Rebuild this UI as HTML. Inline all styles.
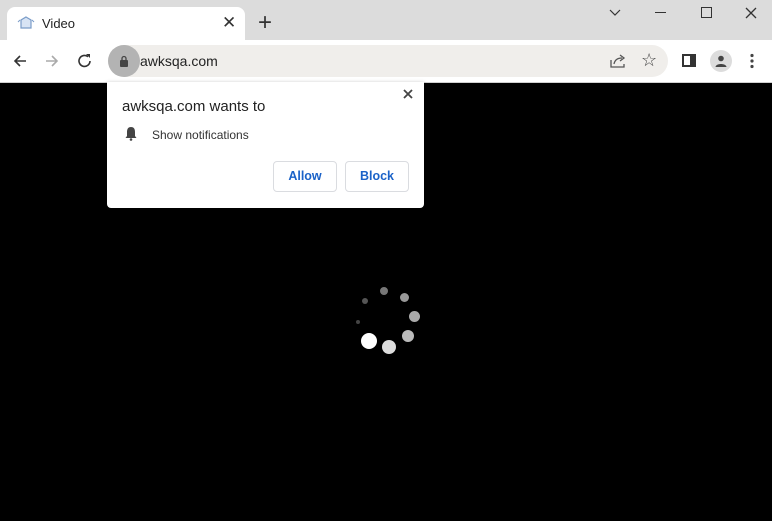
<!DOCTYPE html>
<html><head><style>
*{margin:0;padding:0;box-sizing:border-box}
body{width:772px;height:521px;overflow:hidden;background:#000;font-family:"Liberation Sans",sans-serif;position:relative}
.strip{position:absolute;left:0;top:0;width:772px;height:40px;background:#dcdcdc}
.tab{position:absolute;left:7px;top:7px;width:238px;height:34px;background:#fff;border-radius:8px 8px 0 0}
.toolbar{position:absolute;left:0;top:40px;width:772px;height:43px;background:#fff;border-bottom:1px solid #d0d0d0}
.omni{position:absolute;left:108px;top:45px;width:560px;height:32px;background:#f0eeeb;border-radius:16px}
.t{position:absolute;white-space:nowrap}
.pop{position:absolute;left:107px;top:82px;width:317px;height:126px;background:#fff;border-radius:0 0 4px 4px;box-shadow:0 1px 4px rgba(0,0,0,.3)}
.btn{position:absolute;top:79px;height:31px;border:1px solid #dadce0;border-radius:4px;color:#1a62c8;font-size:12.5px;font-weight:bold;text-align:center;line-height:29px}
.d{position:absolute;border-radius:50%}
</style></head><body>
<div class="strip"></div>
<div class="tab"></div>
<svg class="t" style="left:17px;top:15px" width="18" height="16" viewBox="0 0 18 16"><path d="M9 2 L14 5 L14 13 L4 13 L4 5 Z" fill="#d8e4f4" stroke="#7a9cc8" stroke-width="1.2"/><path d="M1 7 L3 5 M17 7 L15 5" stroke="#7a9cc8"/></svg>
<div class="t" style="left:42px;top:16px;font-size:13px;color:#222">Video</div>
<div class="t" style="left:222px;top:13px;font-size:17px;color:#333">✕</div>
<div class="t" style="left:258px;top:9px;font-size:24px;color:#333">+</div>
<svg class="t" style="left:608px;top:8px" width="14" height="10"><path d="M2 2 L7 7 L12 2" stroke="#333" fill="none" stroke-width="1.2"/></svg>
<div class="t" style="left:655px;top:12px;width:11px;height:1px;background:#333"></div>
<div class="t" style="left:701px;top:7px;width:11px;height:11px;border:1.3px solid #333"></div>
<svg class="t" style="left:745px;top:7px" width="12" height="12"><path d="M1 1 L11 11 M11 1 L1 11" stroke="#333" stroke-width="1.3"/></svg>
<div class="toolbar"></div>
<svg class="t" style="left:12px;top:53px" width="16" height="16"><path d="M14 8 H3 M8 3 L3 8 L8 13" stroke="#333" fill="none" stroke-width="1.6"/></svg>
<svg class="t" style="left:44px;top:53px" width="16" height="16"><path d="M2 8 H13 M8 3 L13 8 L8 13" stroke="#aaa" fill="none" stroke-width="1.6"/></svg>
<svg class="t" style="left:76px;top:52px" width="18" height="18"><path d="M14 9 A5.5 5.5 0 1 1 12 4.7" stroke="#333" fill="none" stroke-width="1.6"/><path d="M10 2 H14 V6 Z" fill="#333"/></svg>
<div class="omni"></div>
<div class="t" style="left:108px;top:45px;width:32px;height:32px;border-radius:50%;background:#b3b3b3"></div>
<svg class="t" style="left:119px;top:55px" width="10" height="12"><rect x="1" y="5" width="8" height="7" rx="1" fill="#444"/><path d="M3 5 V3.5 A2 2 0 0 1 7 3.5 V5" stroke="#444" fill="none" stroke-width="1.3"/></svg>
<div class="t" style="left:140px;top:53px;font-size:14px;color:#222">awksqa.com</div>
<svg class="t" style="left:609px;top:53px" width="18" height="16"><path d="M2 7 V14 H15 V11" stroke="#555" fill="none" stroke-width="1.3"/><path d="M5 11 C6 6 10 5 13 5 M11 2 L15 5 L11 8" stroke="#555" fill="none" stroke-width="1.3"/></svg>
<div class="t" style="left:641px;top:50px;font-size:18px;color:#444">☆</div>
<div class="t" style="left:682px;top:54px;width:14px;height:13px;border:2px solid #333;border-right-width:6px"></div>
<div class="t" style="left:710px;top:50px;width:22px;height:22px;border-radius:50%;background:#dcdcdc"></div>
<svg class="t" style="left:714px;top:54px" width="14" height="14"><circle cx="7" cy="4.5" r="2.8" fill="#444"/><path d="M1.5 13 C2 9 12 9 12.5 13 Z" fill="#444"/></svg>
<svg class="t" style="left:750px;top:53px" width="4" height="16"><circle cx="2" cy="2.5" r="1.6" fill="#444"/><circle cx="2" cy="8" r="1.6" fill="#444"/><circle cx="2" cy="13.5" r="1.6" fill="#444"/></svg>
<div class="pop">
<svg class="t" style="left:296px;top:7px" width="10" height="10"><path d="M1 1 L9 9 M9 1 L1 9" stroke="#444" stroke-width="1.8"/></svg>
<div class="t" style="left:15px;top:16px;font-size:15px;color:#222">awksqa.com wants to</div>
<svg class="t" style="left:17px;top:44px" width="14" height="15"><path d="M7 1 C3.5 1 3 4 3 6 V10 L1.5 12 H12.5 L11 10 V6 C11 4 10.5 1 7 1 Z" fill="#444"/><circle cx="7" cy="13.5" r="1.3" fill="#444"/></svg>
<div class="t" style="left:45px;top:46px;font-size:12px;color:#333">Show notifications</div>
<div class="btn" style="left:166px;width:64px">Allow</div>
<div class="btn" style="left:238px;width:64px">Block</div>
</div>
<div class="d" style="left:379.5px;top:286.5px;width:8px;height:8px;background:#777"></div>
<div class="d" style="left:399.5px;top:292.5px;width:9px;height:9px;background:#999"></div>
<div class="d" style="left:408.5px;top:310.5px;width:11px;height:11px;background:#aaa"></div>
<div class="d" style="left:402px;top:330px;width:12px;height:12px;background:#bbb"></div>
<div class="d" style="left:382px;top:339.5px;width:14px;height:14px;background:#ddd"></div>
<div class="d" style="left:360.5px;top:333px;width:16px;height:16px;background:#fff"></div>
<div class="d" style="left:356px;top:319.5px;width:4px;height:4px;background:#444"></div>
<div class="d" style="left:361.5px;top:297.5px;width:6px;height:6px;background:#555"></div>
</body></html>
